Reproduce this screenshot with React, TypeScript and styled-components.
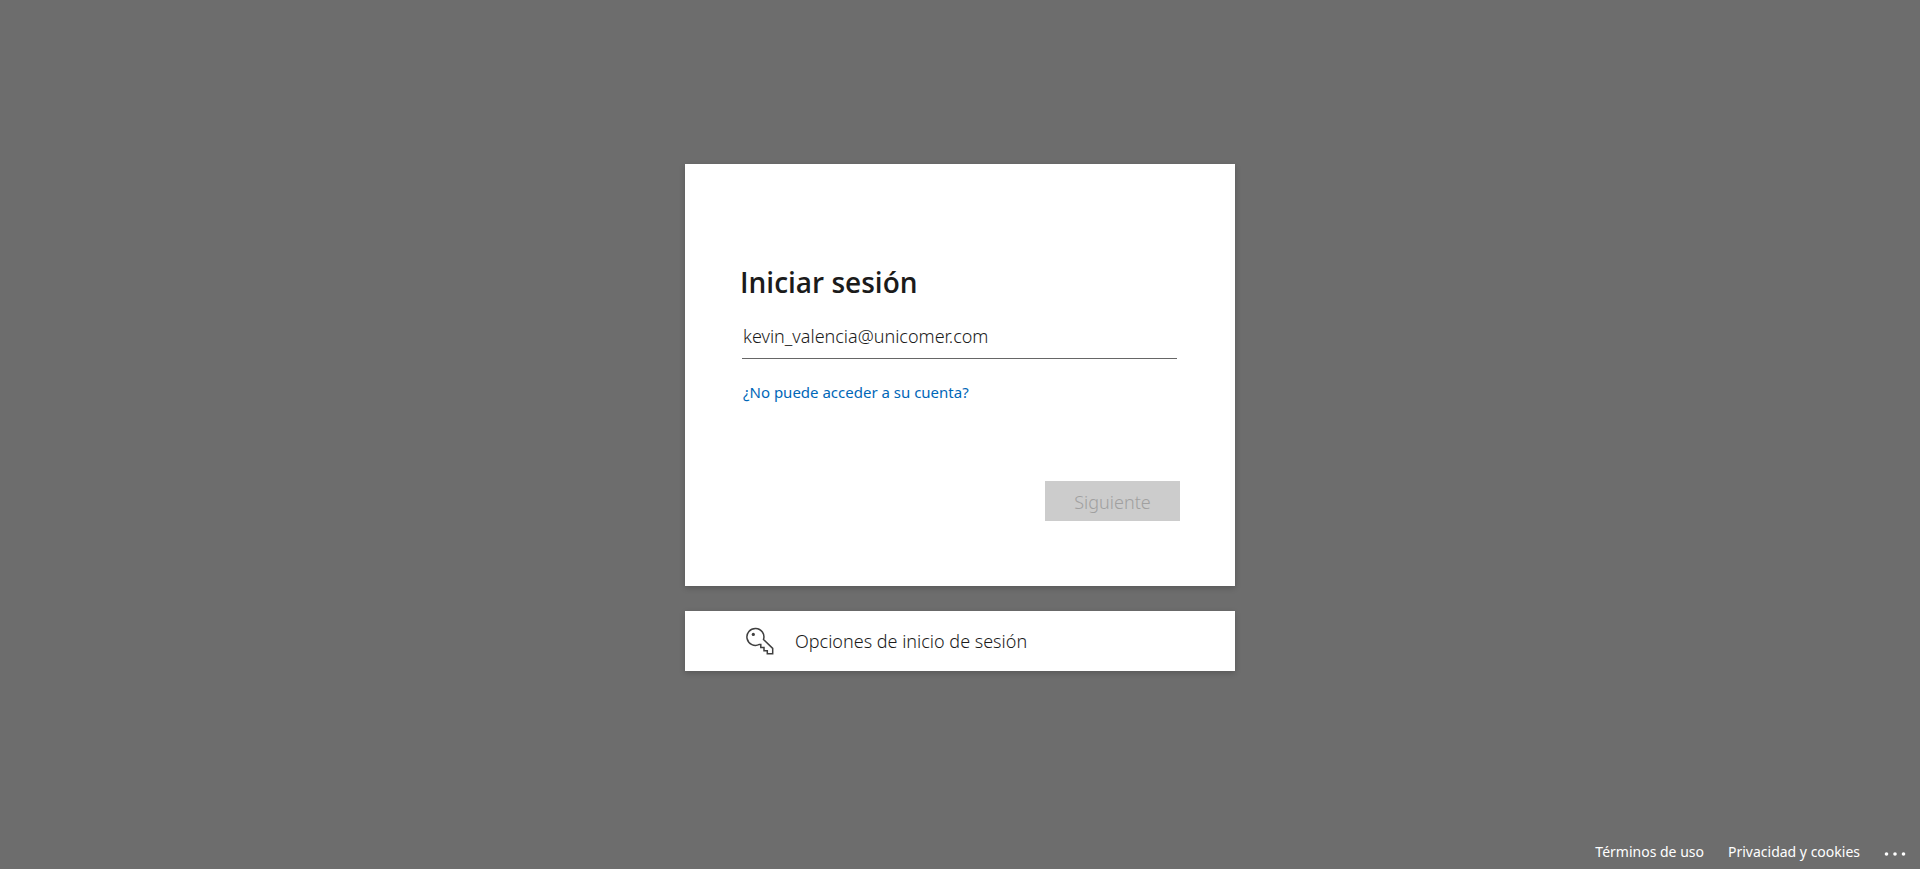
import React from "react";
import styled, { createGlobalStyle } from "styled-components";

const GlobalStyle = createGlobalStyle`
  * { box-sizing: border-box; }
  body {
    margin: 0;
    background: #6d6d6d;
    color: #1b1b1b;
    font-family: "Noto Sans", "Open Sans", sans-serif;
  }
`;

const Page = styled.div`
  display: flex;
  flex-direction: column;
  min-height: 100vh;
`;

const Content = styled.main`
  flex: 1;
  display: flex;
  flex-direction: column;
  align-items: center;
  justify-content: center;
  gap: 25px;
`;

const Panel = styled.div`
  width: 100%;
  max-width: 550px;
  background: #fff;
  box-shadow: 0 2px 6px rgba(0, 0, 0, 0.2);
`;

const SignInForm = styled.form`
  display: flex;
  flex-direction: column;
  align-items: flex-start;
  padding: 100px 55px 65px;
`;

const Title = styled.h1`
  margin: 0;
  font-family: "Open Sans", sans-serif;
  font-size: 28px;
  line-height: 36px;
  font-weight: 600;
`;

const EmailInput = styled.input`
  width: calc(100% - 5px);
  height: 44px;
  margin: 15px 0 0 2px;
  padding: 0 0 2px 1px;
  border: 0;
  border-bottom: 1px solid #666;
  border-radius: 0;
  outline: 0;
  background: transparent;
  color: #1b1b1b;
  font-family: inherit;
  font-size: 18px;
  font-weight: 350;
`;

const HelpLink = styled.a`
  margin: 23px 0 0 3px;
  color: #0067b8;
  font-size: 15px;
  line-height: 20px;
  text-decoration: none;
`;

const NextButton = styled.button`
  align-self: flex-end;
  width: 135px;
  height: 40px;
  margin-top: 79px;
  padding: 2px 0 0;
  border: 0;
  background: #ccc;
  color: #a0a0a0;
  font-family: inherit;
  font-size: 18px;
  font-weight: 300;
`;

const OptionsButton = styled.button`
  display: flex;
  align-items: center;
  gap: 20px;
  width: 100%;
  height: 60px;
  padding: 0 60px;
  border: 0;
  background: transparent;
  color: #1b1b1b;
  font-family: inherit;
  font-size: 18px;
  font-weight: 350;
`;

const Footer = styled.footer`
  display: flex;
  justify-content: flex-end;
  align-items: center;
  gap: 24px;
  height: 34px;
  padding-right: 14px;
`;

const FooterLink = styled.a`
  color: #fff;
  font-size: 14px;
  line-height: 20px;
  text-decoration: none;
`;

const MoreButton = styled.button`
  display: flex;
  padding: 4px 0 0;
  border: 0;
  background: transparent;
`;

const KeyIcon = () => (
  <svg width="30" height="30" viewBox="0 0 30 30" fill="none" aria-hidden="true">
    <path
      d="M18.5 13.5L27.7 22.4V27.7H22.3V24.7H19V21.4H15.8V18.4H14.4A8.5 8.5 0 1 1 18.5 13.5Z"
      stroke="#404040"
      strokeWidth="1.5"
    />
    <circle cx="8.3" cy="8.4" r="1.6" fill="#404040" />
  </svg>
);

const DotsIcon = () => (
  <svg width="22" height="4" viewBox="0 0 22 4" fill="#fff" aria-hidden="true">
    <circle cx="2.5" cy="2" r="1.8" />
    <circle cx="11" cy="2" r="1.8" />
    <circle cx="19.5" cy="2" r="1.8" />
  </svg>
);

export default function App() {
  return (
    <Page>
      <GlobalStyle />
      <Content>
        <Panel>
          <SignInForm>
            <Title>Iniciar sesión</Title>
            <EmailInput
              type="email"
              aria-label="Correo electrónico"
              defaultValue="kevin_valencia@unicomer.com"
            />
            <HelpLink href="#cuenta">¿No puede acceder a su cuenta?</HelpLink>
            <NextButton type="submit" disabled>
              Siguiente
            </NextButton>
          </SignInForm>
        </Panel>
        <Panel>
          <OptionsButton type="button">
            <KeyIcon />
            Opciones de inicio de sesión
          </OptionsButton>
        </Panel>
      </Content>
      <Footer>
        <FooterLink href="#terminos">Términos de uso</FooterLink>
        <FooterLink href="#privacidad">Privacidad y cookies</FooterLink>
        <MoreButton type="button" aria-label="Más información">
          <DotsIcon />
        </MoreButton>
      </Footer>
    </Page>
  );
}
